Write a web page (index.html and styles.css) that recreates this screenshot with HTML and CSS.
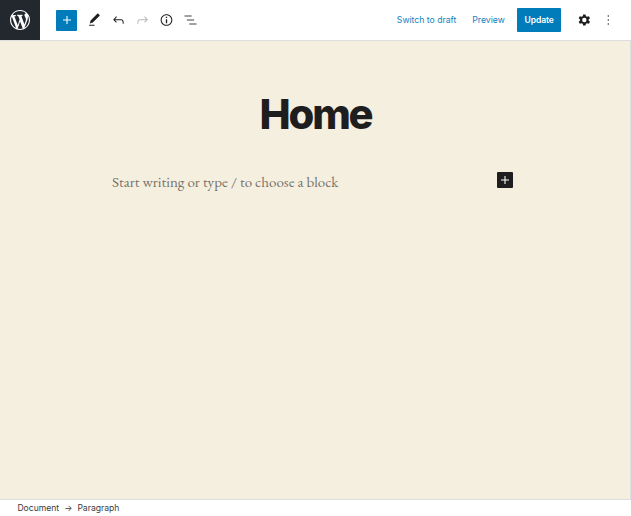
FILE: index.html
```html
<!DOCTYPE html>
<html lang="en">
<head>
<meta charset="utf-8">
<title>Edit Page</title>
<link rel="stylesheet" href="styles.css">
</head>
<body>
<div class="editor">
  <header class="header">
    <a class="logo" aria-label="View pages"><svg viewBox="0 0 20 20"><path fill-rule="evenodd" d="M20 10c0-5.51-4.49-10-10-10C4.48 0 0 4.49 0 10c0 5.52 4.48 10 10 10 5.51 0 10-4.48 10-10zM7.78 15.37L4.37 6.22c.55-.02 1.17-.08 1.17-.08.5-.06.44-1.13-.06-1.11 0 0-1.45.11-2.37.11-.18 0-.37 0-.58-.01C4.12 2.69 6.87 1.11 10 1.11c2.33 0 4.45.87 6.05 2.34-.68-.11-1.65.39-1.65 1.58 0 .74.45 1.36.9 2.1.35.61.55 1.36.55 2.46 0 1.49-1.4 5-1.4 5l-3.03-8.37c.54-.02.82-.17.82-.17.5-.05.44-1.25-.06-1.22 0 0-1.44.12-2.38.12-.87 0-2.33-.12-2.33-.12-.5-.03-.56 1.2-.06 1.22l.92.08 1.26 3.41zM17.41 10c.24-.64.74-1.87.43-4.25.7 1.29 1.05 2.71 1.05 4.25 0 3.29-1.73 6.24-4.4 7.78.97-2.59 1.94-5.2 2.92-7.78zM6.1 18.09C3.12 16.65 1.11 13.53 1.11 10c0-1.3.23-2.48.72-3.59C3.25 10.3 4.67 14.2 6.1 18.09zm4.03-6.63l2.58 6.98c-.86.29-1.76.45-2.71.45-.79 0-1.57-.11-2.29-.33.81-2.38 1.62-4.74 2.42-7.1z"/></svg></a>
    <div class="tools">
      <button class="inserter" aria-label="Add block"><svg class="icon" viewBox="0 0 24 24"><path d="M18 11.2h-5.2V6h-1.6v5.2H6v1.6h5.2V18h1.6v-5.2H18z"/></svg></button>
      <svg class="icon" viewBox="-.75 0 24 24"><path d="M20.1 5.1L16.9 2 6.2 12.7l-1.3 4.4 4.5-1.3L20.1 5.1zM4 20.8h8v-1.5H4v1.5z"/></svg>
      <svg class="icon" viewBox="-.75 0 24 24"><path d="M18.3 11.7c-.6-.6-1.4-.9-2.3-.9H6.7l2.9-3.3-1.1-1-4.5 5L8.5 16l1-1-2.7-2.7H16c.5 0 .9.2 1.3.5 1 1 1 3.4 1 4.5v.3h1.5v-.2c0-1.5 0-4.3-1.5-5.7z"/></svg>
      <svg class="icon disabled" viewBox="-.75 0 24 24"><path d="M15.6 6.5l-1.1 1 2.9 3.3H8c-.9 0-1.7.3-2.3.9-1.4 1.5-1.4 4.2-1.4 5.6v.2h1.5v-.3c0-1.1 0-3.5 1-4.5.3-.3.7-.5 1.3-.5h9.2L14.5 15l1.1 1.1 4.6-4.6-4.6-5z"/></svg>
      <svg class="icon" viewBox="-.75 0 24 24"><path fill-rule="evenodd" d="M12 3.2c-4.8 0-8.8 3.9-8.8 8.8 0 4.8 3.9 8.8 8.8 8.8 4.8 0 8.8-3.9 8.8-8.8 0-4.8-4-8.8-8.8-8.8zm0 16c-4 0-7.2-3.3-7.2-7.2C4.8 8 8 4.8 12 4.8s7.2 3.3 7.2 7.2c0 4-3.2 7.2-7.2 7.2zM11 17h2v-6h-2v6zm0-8h2V7h-2v2z"/></svg>
      <svg class="icon outline" viewBox="-.75 0 24 24"><path d="M13.8 5.2H3v1.5h10.8V5.2zm-3.6 12v1.5H21v-1.5H10.2zm7.2-6H6.6v1.5h10.8v-1.5z"/></svg>
    </div>
    <div class="settings">
      <a class="link">Switch to draft</a>
      <a class="link preview">Preview</a>
      <button class="update">Update</button>
      <svg class="icon cog" viewBox="-.5 0 24 24"><path fill-rule="evenodd" d="M10.2 3.7h3.6l.6 2.7 1.5.9 2.9-.9 1.7 3-2.1 2v1.2l2.1 2-1.7 3-2.9-.9-1.5.9-.6 2.7h-3.6l-.6-2.7-1.5-.9-2.9.9-1.7-3 2.1-2v-1.2l-2.1-2 1.7-3 2.9.9 1.5-.9zM15.3 12a3.3 3.3 0 11-6.6 0 3.3 3.3 0 016.6 0z"/></svg>
      <svg class="icon more" viewBox="-.5 0 24 24"><path d="M13 19h-2v-2h2v2zm0-6h-2v-2h2v2zm0-6h-2V5h2v2z"/></svg>
    </div>
  </header>
  <main class="canvas">
    <h1 class="title">Home</h1>
    <div class="block">
      <p class="prompt">Start writing or type / to choose a block</p>
      <button class="block-add" aria-label="Add block"><svg class="icon" viewBox="0 0 24 24"><path d="M18 11.2h-5.2V6h-1.6v5.2H6v1.6h5.2V18h1.6v-5.2H18z"/></svg></button>
    </div>
  </main>
  <footer class="breadcrumb"><span>Document</span><span class="arrow">→</span><span>Paragraph</span></footer>
</div>
</body>
</html>
```
FILE: styles.css
```css
* { box-sizing: border-box; }
body { margin: 0; background: #fff; color: #1e1e1e; font-family: Inter, "Liberation Sans", sans-serif; }
button { border: 0; padding: 0; font: inherit; color: #fff; display: flex; align-items: center; justify-content: center; }
.editor { height: 516px; display: flex; flex-direction: column; overflow: hidden; }
.header { height: 41px; flex: none; display: flex; border-bottom: 1px solid #dcdfe1; }
.logo { width: 40px; height: 40px; background: #23282e; display: flex; align-items: center; justify-content: center; }
.logo svg { width: 20px; height: 20px; fill: #fff; }
.icon { display: block; width: 16px; height: 16px; fill: currentColor; flex: none; }
.tools { display: flex; align-items: center; gap: 8px; padding-left: 16px; height: 40px; }
.inserter { width: 21px; height: 21px; background: #007cba; border-radius: 1px; margin-right: 1px; }
.disabled { color: #b8b8b8; }
.outline { color: #444; }
.settings { margin-left: auto; display: flex; align-items: center; height: 40px; padding-right: 15px; }
.link { font-size: 8.67px; color: #1583be; white-space: nowrap; }
.preview { margin-left: 16px; }
.update { width: 44.6px; height: 24px; margin-left: 12px; background: #007cba; border-radius: 1px; font-size: 8.5px; font-weight: 600; letter-spacing: -0.1px; }
.cog { margin-left: 14.6px; }
.more { margin-left: 8px; color: #555; }
.canvas { flex: 1; background: #f5efe0; border-right: 1px solid #dcdfe1; }
.title { margin: 48px 0 0; padding-left: 1px; text-align: center; font-size: 41.7px; line-height: 50px; font-weight: 800; letter-spacing: -2.2px; }
.block { width: 401px; margin: 32px 0 0 112px; display: flex; justify-content: space-between; align-items: flex-start; }
.prompt { margin: 0; font-family: "EB Garamond", "Liberation Serif", serif; font-size: 15.05px; line-height: 22px; color: #77736b; white-space: nowrap; }
.block-add { width: 16px; height: 16px; margin-top: 1px; background: #1e1e1e; border-radius: 1px; }
.breadcrumb { height: 17px; flex: none; border-top: 1px solid #dcdfe1; padding-left: 17.4px; display: flex; align-items: center; font-size: 8.6px; color: #3c3c3c; }
.arrow { margin: 0 5px; }
```
